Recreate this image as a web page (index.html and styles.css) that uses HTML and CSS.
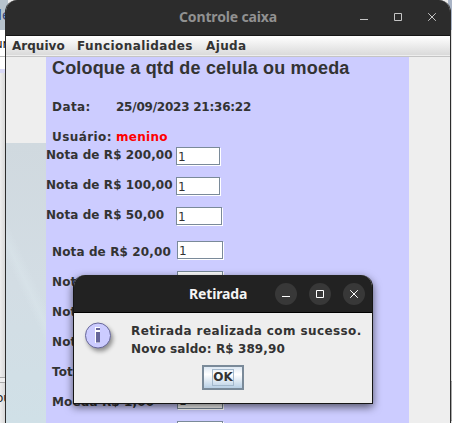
FILE: index.html
```html
<!DOCTYPE html>
<html lang="pt-BR">
<head>
<meta charset="utf-8">
<title>Controle caixa</title>
<link rel="stylesheet" href="styles.css">
</head>
<body>
<div class="desktop">
  <div class="behind">
    <div class="behind-top"><span>de</span></div>
    <div class="behind-menu"><span>ur</span></div>
    <div class="behind-strip"></div>
    <div class="behind-body"></div>
    <div class="behind-foot"><span>ou</span></div>
  </div>
  <div class="behind-right"><div class="thumb"></div></div>

  <main class="window">
    <header class="titlebar">
      <h1>Controle caixa</h1>
      <div class="controls">
        <svg width="10" height="10" viewBox="0 0 10 10"><path d="M1 7.5h8"/></svg>
        <svg width="10" height="10" viewBox="0 0 10 10"><path d="M1.5 1.5h7v7h-7z"/></svg>
        <svg width="10" height="10" viewBox="0 0 10 10"><path d="M1.2 1.2l7.6 7.6M8.8 1.2l-7.6 7.6"/></svg>
      </div>
    </header>
    <nav class="menu"><span>Arquivo</span><span class="m2">Funcionalidades</span><span class="m3">Ajuda</span></nav>
    <div class="content">
      <div class="backdrop"></div>
      <section class="panel">
        <h2>Coloque a qtd de celula ou moeda</h2>
        <div class="info data"><span>Data:</span><span class="date">25/09/2023 21:36:22</span></div>
        <div class="info user"><span>Usuário:</span><span class="name">menino</span></div>
        <div class="row"><label>Nota de R$ 200,00</label><div class="field short">1</div></div>
        <div class="row"><label>Nota de R$ 100,00</label><div class="field short">1</div></div>
        <div class="row wide"><label>Nota de R$ 50,00</label><div class="field">1</div></div>
        <div class="row inset"><label>Nota de R$ 20,00</label><div class="field">1</div></div>
        <div class="row inset"><label>Nota de R$ 10,00</label><div class="field">1</div></div>
        <div class="row inset"><label>Nota de R$ 5,00</label><div class="field">1</div></div>
        <div class="row inset"><label>Nota de R$ 2,00</label><div class="field">1</div></div>
        <div class="row inset"><label>Total</label></div>
        <div class="row inset"><label>Moeda R$ 1,00</label><div class="field">1</div></div>
        <div class="row inset"><label></label><div class="field"></div></div>
      </section>
    </div>
  </main>

  <div class="dialog">
    <header class="dialog-bar">
      <h3>Retirada</h3>
      <div class="buttons">
        <span><svg width="10" height="10" viewBox="0 0 10 10"><path d="M1 7.5h8"/></svg></span>
        <span><svg width="10" height="10" viewBox="0 0 10 10"><path d="M1.5 1.5h7v7h-7z"/></svg></span>
        <span><svg width="10" height="10" viewBox="0 0 10 10"><path d="M1.2 1.2l7.6 7.6M8.8 1.2l-7.6 7.6"/></svg></span>
      </div>
    </header>
    <div class="dialog-body">
      <div class="message">
        <svg class="info-icon" width="27" height="27" viewBox="0 0 27 27">
          <circle class="disc" cx="13" cy="13.500" r="12.5"/>
          <path class="halo" d="M10 5h5v16h-5z"/>
          <path class="glyph" d="M11 6h4v2h-4zM11 10h4v10.500h-4z"/>
        </svg>
        <div class="lines"><p>Retirada realizada com sucesso.</p><p class="saldo">Novo saldo: R$ 389,90</p></div>
      </div>
      <button><span>OK</span></button>
    </div>
  </div>
</div>
</body>
</html>
```
FILE: styles.css
```css
* { box-sizing: border-box; }
body { margin: 0; font: bold 12px/16px "DejaVu Sans", sans-serif; color: #333; }
h1, h2, h3, p { margin: 0; }
.desktop { position: relative; width: 452px; height: 423px; overflow: hidden; background: #eee; }
svg { display: block; }

.behind { width: 8px; height: 423px; display: flex; flex-direction: column; overflow: hidden; }
.behind span { display: block; width: 30px; }
.behind-top { height: 30px; background: #b7c3cd; color: #35477d; font-weight: normal; font-size: 14px; padding-top: 7px; }
.behind-top span { margin-left: -7px; }
.behind-menu { height: 27px; background: #fff; border-bottom: 1px solid #bbb; padding-top: 6px; color: #111; font-weight: normal; }
.behind-menu span { margin-left: -5px; }
.behind-strip { height: 16px; background: #d9d9f5; border-top: 12px solid #fff; }
.behind-body { height: 309px; background: linear-gradient(90deg, #eee, #ccc); border-bottom: 1px solid #aaa; }
.behind-foot { height: 41px; margin-top: 4px; border-top: 1px solid #aaa; padding-top: 7px; color: #222; font-weight: normal; background: linear-gradient(90deg, #eee, #ccc); }
.behind-foot span { margin-left: -4px; }
.behind-right { position: absolute; right: 0; top: 0; width: 4px; height: 423px; background: linear-gradient(#a9b4c6 30px, #ddd 30px); padding-top: 381px; }
.thumb { height: 40px; border: solid #999; border-width: 1px 0; background: #aaa; box-shadow: 0 0 0 4px #ddd; }

.window { position: absolute; left: 5px; top: 0; width: 446px; height: 423px; border: solid #2c2c2c; border-width: 0 1px; border-radius: 12px 12px 0 0; overflow: hidden; background: #eee; }
.titlebar { height: 36px; background: #2c2c2c; border-bottom: 1px solid #151515; display: flex; align-items: center; }
.titlebar h1 { flex: 1; padding: 0 0 1px 173px; font: bold 14px/18px "Noto Sans", sans-serif; letter-spacing: -.15px; color: #919191; white-space: nowrap; }
.controls { display: flex; gap: 24px; padding: 0 13px 1px 0; }
.controls svg { stroke: #c5c5c5; fill: none; }
.menu { height: 21px; background: linear-gradient(#fff, #dadada 19px, #eee 19px, #eee 20px); border-bottom: 1px solid #c4c4c4; display: flex; padding: 2px 0 0 6px; }
.menu span { width: 65px; letter-spacing: .02px; white-space: nowrap; }
.menu .m2 { width: 129px; letter-spacing: .42px; }
.menu .m3 { letter-spacing: .38px; }
.content { display: flex; height: 366px; }
.backdrop { width: 40px; margin-top: 86px; background: linear-gradient(65deg, transparent 45%, #dfebf055 50%, transparent 56%), linear-gradient(#d0d9df, #d3dde4 50%, #d0e0e7); }
.panel { width: 363px; background: #ccf; overflow: hidden; white-space: nowrap; }
.panel h2 { font: bold 18px/22px "Liberation Sans", sans-serif; letter-spacing: .17px; padding-left: 6px; height: 42px; }
.info { display: flex; padding-left: 6px; height: 30px; }
.info.user { height: 18px; }
.info span:first-child { width: 64px; letter-spacing: .42px; }
.info .date { letter-spacing: -.23px; }
.info .name { color: #f00; letter-spacing: .3px; }
.row { display: flex; height: 30px; }
.row label { width: 130px; letter-spacing: .08px; }
.row.wide { height: 34px; }
.row.inset label { width: 131px; padding: 3px 0 0 6px; letter-spacing: .12px; }
.field { width: 46px; height: 18px; background: #fff; border: 1px solid #7a8a99; box-shadow: 1px 1px #fff; padding: 1px 0 0 1px; font-weight: normal; }
.field.short { width: 44px; }

.dialog { position: absolute; left: 73px; top: 275px; width: 300px; height: 129px; border: 1px solid #151515; border-top: 0; border-radius: 12px 12px 0 0; background: #eee; box-shadow: 0 3px 8px #0009; overflow: hidden; }
.dialog-bar { height: 38px; background: #222; border-bottom: 1px solid #000; display: flex; align-items: center; }
.dialog-bar h3 { flex: 1; padding-left: 115px; font: bold 14px/18px "Noto Sans", sans-serif; letter-spacing: -.15px; color: #f4f4f4; white-space: nowrap; }
.buttons { display: flex; gap: 12px; padding-right: 7px; }
.buttons span { width: 22px; height: 22px; border-radius: 50%; background: #383838; display: grid; place-items: center; }
.buttons svg { stroke: #fff; fill: none; }
.dialog-body { display: flex; flex-direction: column; align-items: center; }
.message { display: flex; width: 100%; height: 52px; padding: 9px 0 0 11px; white-space: nowrap; }
.info-icon { overflow: visible; filter: drop-shadow(2px 3px 2px #0006); }
.disc { fill: #ccf; stroke: #669; }
.halo { fill: #fff; }
.glyph { fill: #669; }
.lines { padding-left: 19px; line-height: 18px; letter-spacing: .39px; }
.saldo { letter-spacing: .1px; }
button { width: 42px; height: 25px; padding: 0; border: 2px solid #7a8a99; background: linear-gradient(#dde8f3, #fff 35%, #b8cfe5); font: inherit; color: #333; display: grid; place-items: center; }
button span { border: 1px solid #a3b8cc; line-height: 15px; width: 22px; }
```
